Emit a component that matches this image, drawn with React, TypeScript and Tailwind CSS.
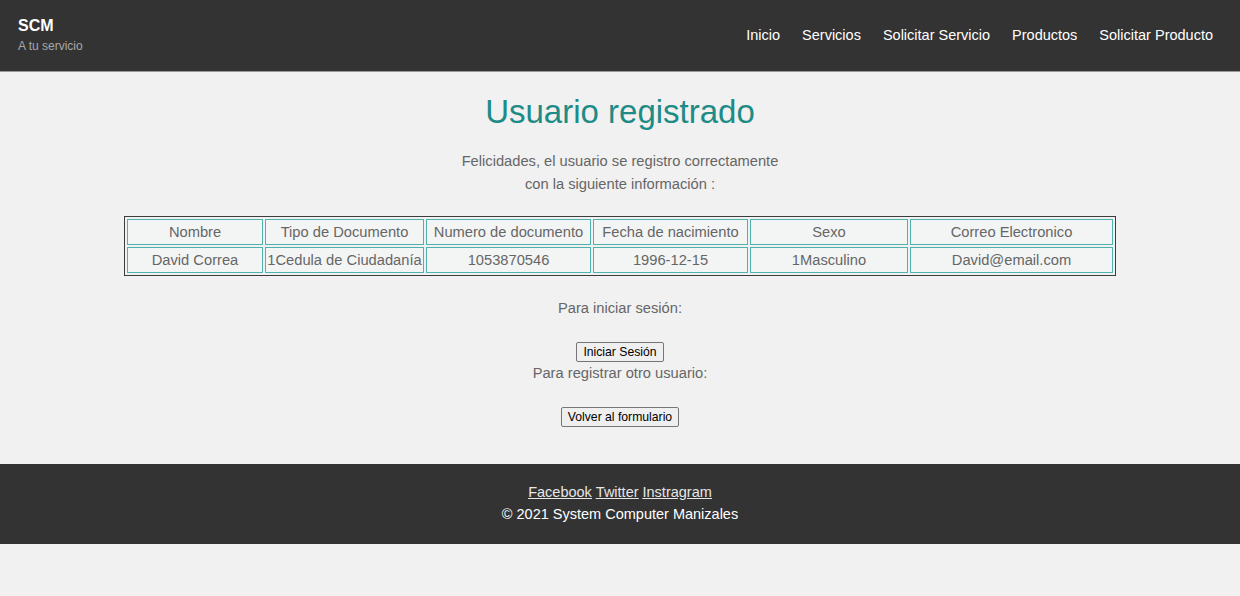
const cols = [
  { head: "Nombre", value: "David Correa", w: "w-[136px]" },
  { head: "Tipo de Documento", value: "1Cedula de Ciudadanía", w: "w-[159px]" },
  { head: "Numero de documento", value: "1053870546", w: "w-[165px]" },
  { head: "Fecha de nacimiento", value: "1996-12-15", w: "w-[155px]" },
  { head: "Sexo", value: "1Masculino", w: "w-[158px]" },
  { head: "Correo Electronico", value: "David@email.com", w: "w-[203px]" },
];

const links = ["Inicio", "Servicios", "Solicitar Servicio", "Productos", "Solicitar Producto"];

function Btn({ children }: { children: React.ReactNode }) {
  return (
    <button className="h-[20px] rounded-[2px] border border-[#767676] bg-[#efefef] px-[6px] text-[12.2px] leading-[18px] text-black">
      {children}
    </button>
  );
}

export default function App() {
  return (
    <div className="min-h-[596px] bg-[#f1f1f1] font-['Liberation_Sans',Arial,sans-serif]">
      <header className="flex h-[72px] items-center justify-between border-b border-[#9a9a9a] bg-[#333333] pl-[18px] pr-[27px]">
        <div className="-mt-[2px]">
          <div className="text-[16px] font-bold leading-[20px] text-white">SCM</div>
          <div className="mt-[2px] text-[12px] leading-[16px] text-[#a8a8a8]">A tu servicio</div>
        </div>
        <nav className="flex gap-[22px] text-[14.5px] text-white">
          {links.map((l) => (
            <a key={l}>{l}</a>
          ))}
        </nav>
      </header>

      <main className="flex flex-col items-center pb-[36px] text-[#666666]">
        <h1 className="mt-[20px] text-[33px] leading-[40px] text-[#1d8b86]">Usuario registrado</h1>
        <p className="mt-[18px] text-center text-[14.7px] leading-[23px]">
          Felicidades, el usuario se registro correctamente
          <br />
          con la siguiente información :
        </p>

        <table className="mt-[20px] w-[992px] border-separate border-spacing-[2px] border border-[#3c3c3c] text-[14.7px]">
          <tbody>
            <tr>
              {cols.map((c) => (
                <td key={c.head} className={`${c.w} h-[26px] border border-[#4fb3ad] bg-[#f3f5f5] text-center`}>
                  {c.head}
                </td>
              ))}
            </tr>
            <tr>
              {cols.map((c) => (
                <td key={c.head} className={`${c.w} h-[26px] border border-[#4fb3ad] bg-[#f3f5f5] text-center`}>
                  {c.value}
                </td>
              ))}
            </tr>
          </tbody>
        </table>

        <p className="mt-[22px] text-[14.7px] leading-[20px]">Para iniciar sesión:</p>
        <div className="mt-[21px]">
          <Btn>Iniciar Sesión</Btn>
        </div>
        <p className="text-[14.7px] leading-[20px]">Para registrar otro usuario:</p>
        <div className="mt-[21px]">
          <Btn>Volver al formulario</Btn>
        </div>
      </main>

      <footer className="flex h-[80px] flex-col items-center justify-center bg-[#333333] text-[14.5px] leading-[22px]">
        <div className="-mt-[2px] flex gap-[4px] text-[#e6e6e6] underline">
          <a>Facebook</a>
          <a>Twitter</a>
          <a>Instragram</a>
        </div>
        <div className="text-white">© 2021 System Computer Manizales</div>
      </footer>
    </div>
  );
}
